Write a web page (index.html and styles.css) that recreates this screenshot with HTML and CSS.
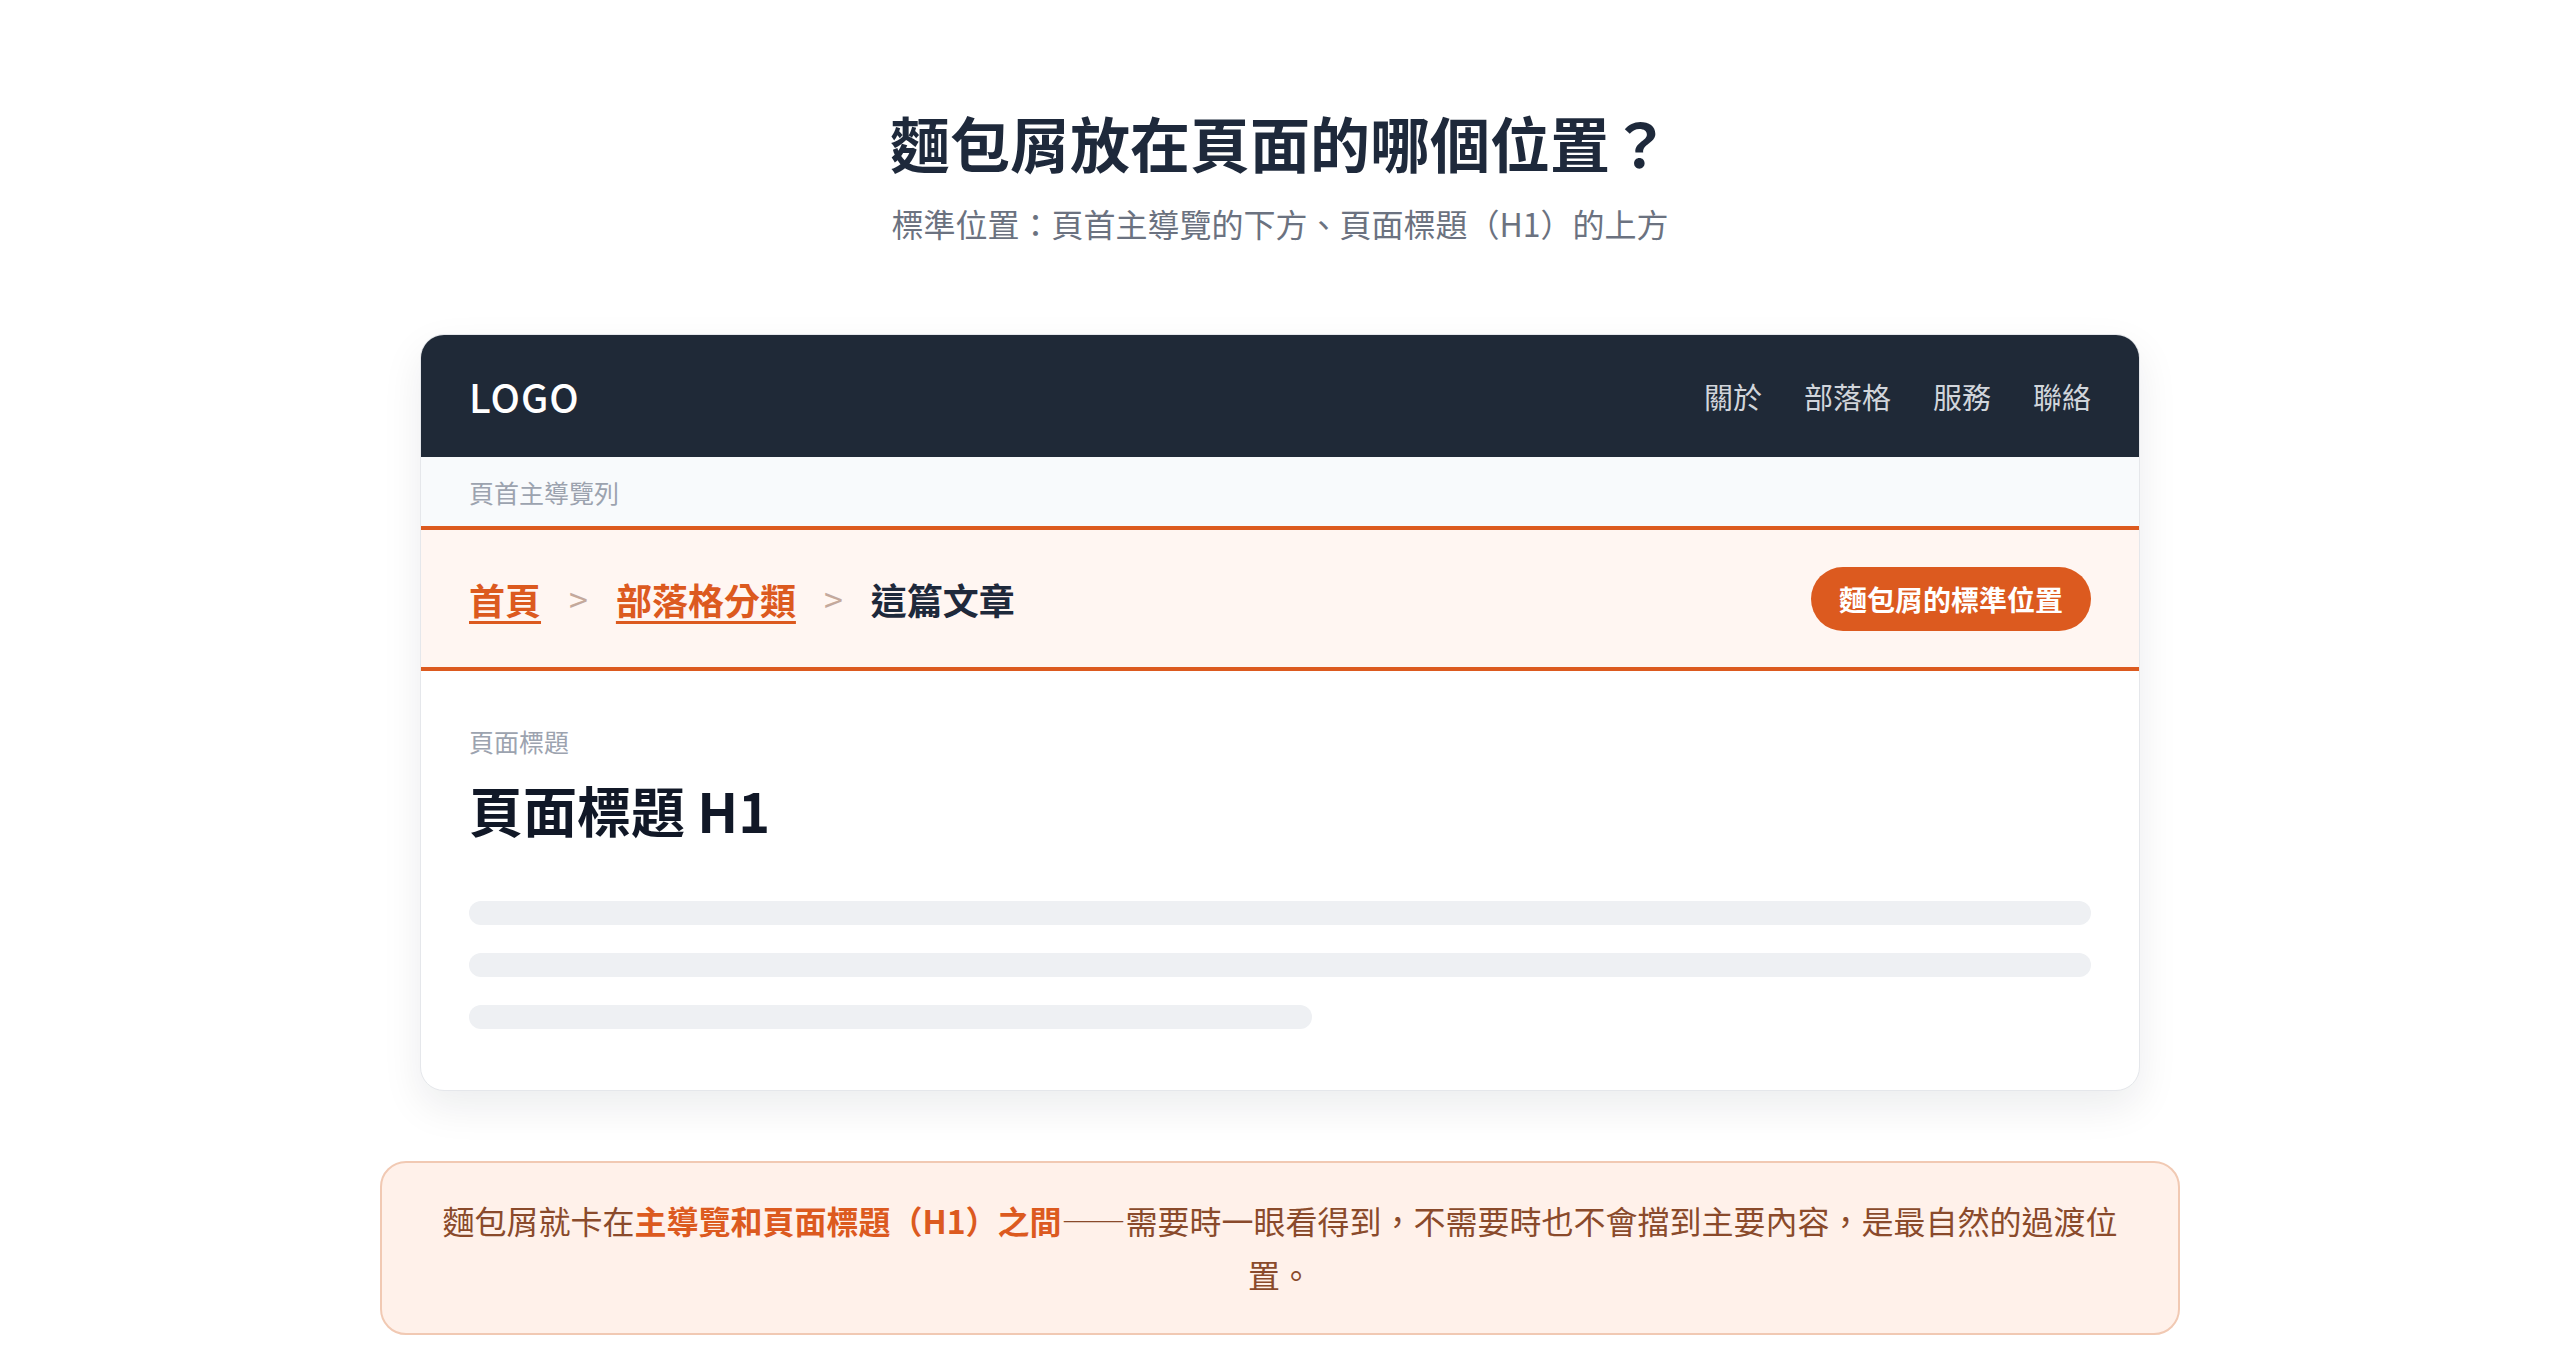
FILE: index.html
```html
<!DOCTYPE html>
<html lang="zh-TW">
<head>
    <meta charset="UTF-8">
    <meta name="viewport" content="width=device-width, initial-scale=1.0">
    <title>麵包屑放在頁面的哪個位置？</title>
    <link rel="stylesheet" href="styles.css">
</head>
<body>
    <div class="page">
        <h1 class="title">麵包屑放在頁面的哪個位置？</h1>
        <p class="subtitle">標準位置：頁首主導覽的下方、頁面標題（H1）的上方</p>

        <div class="mock">
            <header class="mock-header">
                <div class="logo">LOGO</div>
                <nav class="mock-nav">
                    <span>關於</span>
                    <span>部落格</span>
                    <span>服務</span>
                    <span>聯絡</span>
                </nav>
            </header>
            <div class="nav-label">頁首主導覽列</div>

            <div class="crumb-bar">
                <ol class="crumbs">
                    <li><a href="#">首頁</a></li>
                    <li class="sep">&gt;</li>
                    <li><a href="#">部落格分類</a></li>
                    <li class="sep">&gt;</li>
                    <li class="current">這篇文章</li>
                </ol>
                <span class="badge">麵包屑的標準位置</span>
            </div>

            <div class="mock-body">
                <div class="body-label">頁面標題</div>
                <h2 class="page-h1">頁面標題 H1</h2>
                <div class="lines">
                    <div class="line"></div>
                    <div class="line"></div>
                    <div class="line short"></div>
                </div>
            </div>
        </div>

        <div class="callout">
            麵包屑就卡在<strong>主導覽和頁面標題（H1）之間</strong>——需要時一眼看得到，不需要時也不會擋到主要內容，是最自然的過渡位置。
        </div>
    </div>
</body>
</html>
```

FILE: styles.css
```css
:root {
    --navy: #1f2937;
    --orange: #dc5a1f;
    --orange-tint: #fff6f2;
    --muted: #9ca3af;
}

* {
    margin: 0;
    padding: 0;
    box-sizing: border-box;
}

body {
    font-family: "Noto Sans CJK TC", "Noto Sans", sans-serif;
    background: #ffffff;
    color: #1e293b;
}

.page {
    max-width: 1800px;
    margin: 0 auto;
    padding-top: 103px;
    text-align: center;
}

.title {
    font-size: 60px;
    line-height: 78px;
    font-weight: 700;
    color: #1e293b;
}

.subtitle {
    margin-top: 20px;
    font-size: 32px;
    line-height: 44px;
    color: #6b7280;
}

.mock {
    margin: 89px 40px 0;
    text-align: left;
    background: #ffffff;
    border: 1px solid #e5e7eb;
    border-radius: 24px;
    overflow: hidden;
    box-shadow: 0 16px 40px rgba(15, 23, 42, 0.08);
}

.mock-header {
    height: 122px;
    padding: 0 48px;
    display: flex;
    align-items: center;
    justify-content: space-between;
    background: var(--navy);
}

.logo {
    font-size: 39px;
    font-weight: 500;
    color: #ffffff;
    letter-spacing: 1px;
}

.mock-nav {
    display: flex;
    gap: 42px;
    font-size: 29px;
    color: #d1d5db;
}

.nav-label {
    height: 69px;
    padding: 0 48px;
    display: flex;
    align-items: center;
    background: #f8fafc;
    font-size: 25px;
    color: var(--muted);
}

.crumb-bar {
    height: 145px;
    padding: 0 48px;
    display: flex;
    align-items: center;
    justify-content: space-between;
    background: var(--orange-tint);
    border-top: 4px solid var(--orange);
    border-bottom: 4px solid var(--orange);
}

.crumbs {
    list-style: none;
    display: flex;
    align-items: center;
    gap: 28px;
    font-size: 36px;
    font-weight: 600;
}

.crumbs a {
    color: var(--orange);
    text-decoration: underline;
    text-decoration-thickness: 3px;
    text-underline-offset: 6px;
}

.crumbs .sep {
    font-size: 34px;
    font-weight: 400;
    color: #c4a99c;
}

.crumbs .current {
    color: #1e293b;
}

.badge {
    padding: 12px 28px;
    border-radius: 999px;
    background: var(--orange);
    color: #ffffff;
    font-size: 28px;
    font-weight: 700;
    line-height: 40px;
}

.mock-body {
    padding: 53px 48px 61px;
}

.body-label {
    font-size: 25px;
    line-height: 34px;
    color: var(--muted);
}

.page-h1 {
    margin-top: 18px;
    font-size: 54px;
    line-height: 68px;
    font-weight: 700;
    color: #111827;
}

.lines {
    margin-top: 57px;
    display: flex;
    flex-direction: column;
    gap: 28px;
}

.line {
    height: 24px;
    border-radius: 12px;
    background: #eef0f3;
}

.line.short {
    width: 52%;
}

.callout {
    margin-top: 70px;
    padding: 30px 48px 32px;
    background: #fff1ea;
    border: 2px solid #f1c9b3;
    border-radius: 26px;
    font-size: 32px;
    line-height: 54px;
    color: #8a4a2b;
}

.callout strong {
    color: var(--orange);
    font-weight: 700;
}
```
